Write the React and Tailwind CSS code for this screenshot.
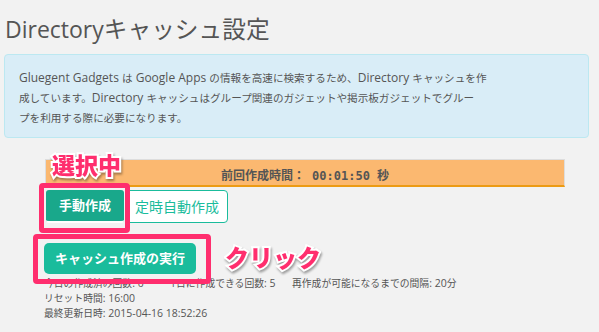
const CJK = /([\u3000-\u30ff\u3400-\u9fff\uff00-\uffef]+)/;

function T({ text, jp }) {
  const parts = text.split(CJK);
  return (
    <>
      {parts.map((p, i) =>
        CJK.test(p) ? (
          <span key={i} className={jp}>
            {p}
          </span>
        ) : (
          <span key={i}>{p}</span>
        )
      )}
    </>
  );
}

export default function App() {
  const font = "font-['Open_Sans','Noto_Sans_CJK_JP',sans-serif]";
  const pinkText =
    "text-[#ff2e6e] font-black font-['Noto_Sans_CJK_JP',sans-serif] [-webkit-text-stroke:4px_white] [paint-order:stroke_fill] [filter:drop-shadow(1px_2px_1px_rgba(0,0,0,0.35))]";
  const infoJp = "text-[10.6px]";
  const statJp = "text-[9.8px]";
  return (
    <div className={`w-[599px] h-[332px] bg-[#f2f2f2] overflow-hidden text-[#555] ${font}`}>
      <h1 className="pl-[5px] pt-[12px] text-[23px] leading-[34px] text-[#555] font-normal">
        <T text="Directoryキャッシュ設定" jp="text-[23.7px]" />
      </h1>
      <div className="ml-[4px] mt-[8px] w-[585px] h-[84px] rounded-[4px] border border-[#bce8f1] bg-[#d9edf7] pl-[14px] pt-[13px] text-[12px] leading-[19px] text-[#555]">
        <div>
          <T text="Gluegent Gadgets は Google Apps の情報を高速に検索するため、Directory キャッシュを作" jp={infoJp} />
        </div>
        <div>
          <T text="成しています。Directory キャッシュはグループ関連のガジェットや掲示板ガジェットでグルー" jp={infoJp} />
        </div>
        <div>
          <T text="プを利用する際に必要になります。" jp={infoJp} />
        </div>
      </div>

      <div className="relative ml-[45px] mt-[21px] w-[520px]">
        <div className="h-[28px] bg-[#fbb870] border border-[#ddd] border-b-2 border-b-[#ec9b14] flex items-center justify-center pt-[6px] text-[12px] font-bold text-[#555] font-['DejaVu_Sans_Mono','Noto_Sans_CJK_JP',monospace]">
          前回作成時間： 00:01:50 秒
        </div>

        <div className="mt-[3px] flex">
          <div className="ml-[1px] w-[78px] h-[33px] rounded-[3px] bg-[#19a88b] border-b-2 border-b-white flex items-center justify-center text-white text-[13px] font-bold">
            手動作成
          </div>
          <div className="ml-[2px] w-[102px] h-[33px] rounded-[4px] border border-[#1abc9c] bg-white flex items-center justify-center text-[#1abc9c] text-[14px]">
            定時自動作成
          </div>
        </div>

        <div className="mt-[20px] ml-[-1px] w-[152px] h-[31px] rounded-[5px] bg-[#1abc9c] flex items-center justify-center text-white text-[13px] font-bold">
          キャッシュ作成の実行
        </div>

        <div className="mt-[2px] ml-[-1px] text-[10.5px] leading-[15px] text-[#555] whitespace-nowrap">
          <div className="flex">
            <span className="w-[126px] shrink-0">
              <T text="今日の作成済み回数: 0" jp={statJp} />
            </span>
            <span className="w-[122px] shrink-0">
              <T text="1日に作成できる回数: 5" jp={statJp} />
            </span>
            <span>
              <T text="再作成が可能になるまでの間隔: 20分" jp={statJp} />
            </span>
          </div>
          <div>
            <T text="リセット時間: 16:00" jp={statJp} />
          </div>
          <div>
            <T text="最終更新日時: 2015-04-16 18:52:26" jp={statJp} />
          </div>
        </div>

        {/* annotations */}
        <div className={`absolute left-[7px] top-[-9px] text-[23px] leading-[28px] ${pinkText}`}>選択中</div>
        <div className="absolute left-[-6px] top-[24px] w-[91px] h-[50px] rounded-[4px] border-[5px] border-[#ff2e6e]" />
        <div className="absolute left-[-12px] top-[75px] w-[178px] h-[50px] rounded-[4px] border-[5px] border-[#ff2e6e]" />
        <div className={`absolute left-[180px] top-[84px] text-[24px] leading-[28px] ${pinkText}`}>クリック</div>
      </div>
    </div>
  );
}
